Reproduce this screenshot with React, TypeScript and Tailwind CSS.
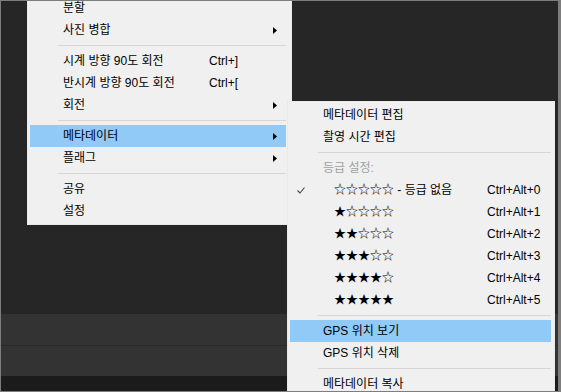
import React from "react";

type Item =
  | { sep: true }
  | {
      sep?: false;
      label: string;
      shortcut?: string;
      arrow?: boolean;
      active?: boolean;
      disabled?: boolean;
      checked?: boolean;
      indent?: boolean;
    };

const mainMenu: Item[] = [
  { label: "분할" },
  { label: "사진 병합", arrow: true },
  { sep: true },
  { label: "시계 방향 90도 회전", shortcut: "Ctrl+]" },
  { label: "반시계 방향 90도 회전", shortcut: "Ctrl+[" },
  { label: "회전", arrow: true },
  { sep: true },
  { label: "메타데이터", arrow: true, active: true },
  { label: "플래그", arrow: true },
  { sep: true },
  { label: "공유" },
  { label: "설정" },
];

const subMenu: Item[] = [
  { label: "메타데이터 편집" },
  { label: "촬영 시간 편집" },
  { sep: true },
  { label: "등급 설정:", disabled: true },
  { label: "☆☆☆☆☆ - 등급 없음", shortcut: "Ctrl+Alt+0", checked: true, indent: true },
  { label: "★☆☆☆☆", shortcut: "Ctrl+Alt+1", indent: true },
  { label: "★★☆☆☆", shortcut: "Ctrl+Alt+2", indent: true },
  { label: "★★★☆☆", shortcut: "Ctrl+Alt+3", indent: true },
  { label: "★★★★☆", shortcut: "Ctrl+Alt+4", indent: true },
  { label: "★★★★★", shortcut: "Ctrl+Alt+5", indent: true },
  { sep: true },
  { label: "GPS 위치 보기", active: true },
  { label: "GPS 위치 삭제" },
  { sep: true },
  { label: "메타데이터 복사" },
];

function Arrow() {
  return (
    <svg width="4" height="7" viewBox="0 0 4 7" className="absolute right-[9px] top-[8px]">
      <path d="M0 0 L4 3.5 L0 7 Z" fill="#000" />
    </svg>
  );
}

function Check() {
  return (
    <svg width="8" height="7" viewBox="0 0 8 7" className="absolute left-[7px] top-[8px]">
      <path d="M0.5 3.5 L3 6 L7.5 0.5" fill="none" stroke="#444" strokeWidth="1.1" />
    </svg>
  );
}

function Menu({ items, shortcutX }: { items: Item[]; shortcutX: string }) {
  return (
    <div className="flex flex-col">
      {items.map((it, i) =>
        it.sep ? (
          <div key={i} className="h-[9px] flex items-center pl-[28px]">
            <div className="h-[1px] w-full bg-[#d7d7d7]" />
          </div>
        ) : (
          <div
            key={i}
            className={`relative h-[22px] flex items-center whitespace-nowrap ${
              it.active ? "bg-[#91c9f7]" : ""
            } ${it.disabled ? "text-[#a0a0a0]" : "text-black"}`}
          >
            {it.checked && <Check />}
            <span className={it.indent ? "pl-[44px]" : "pl-[33px]"}>{it.label}</span>
            {it.shortcut && (
              <span className={`absolute top-0 leading-[22px] ${shortcutX}`}>{it.shortcut}</span>
            )}
            {it.arrow && <Arrow />}
          </div>
        )
      )}
    </div>
  );
}

export default function App() {
  return (
    <div
      className="relative w-[561px] h-[392px] overflow-hidden border-l border-t border-b border-r-[3px] border-[#7d7d7d] bg-[#262626] text-[12px]"
      style={{ fontFamily: '"Liberation Sans", "Noto Sans CJK KR", sans-serif' }}
    >
      {/* background panels */}
      <div className="flex flex-col h-full">
        <div className="flex-1 bg-[#262626]" />
        <div className="h-[31px] bg-[#333333]" />
        <div className="h-[1px] bg-[#2a2a2a]" />
        <div className="h-[30px] bg-[#333333]" />
        <div className="h-[15px] bg-[#1b1b1b]" />
      </div>

      {/* main context menu */}
      <div className="absolute left-[26px] top-[-7px] w-[265px] bg-[#f0f0f0] border border-[#e9e9e9] pl-[2px] pr-[5px] pt-[2px] pb-[2px]">
        <Menu items={mainMenu} shortcutX="left-[179px]" />
      </div>

      {/* metadata submenu */}
      <div className="absolute left-[286px] top-[100px] w-[268px] bg-[#f0f0f0] border border-[#e9e9e9] pl-[2px] pr-[3px] pt-[2px] pb-[2px]">
        <Menu items={subMenu} shortcutX="left-[197px]" />
      </div>
    </div>
  );
}
